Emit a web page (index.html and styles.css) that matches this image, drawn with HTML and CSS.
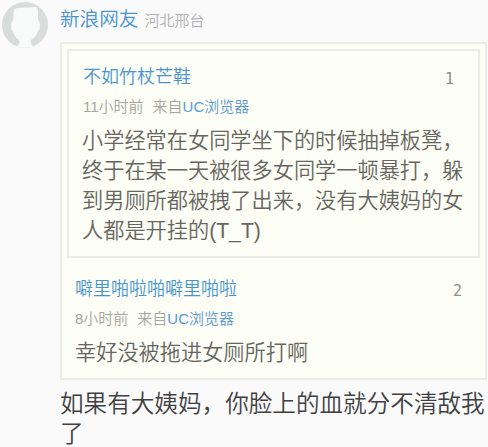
FILE: index.html
```html
<!DOCTYPE html>
<html lang="zh-CN">
<head>
  <meta charset="UTF-8">
  <meta name="viewport" content="width=device-width, initial-scale=1.0">
  <title>网友评论</title>
  <link rel="stylesheet" href="styles.css">
</head>
<body>
  <div class="comment">
    <svg class="avatar" viewBox="0 0 46 46">
      <circle cx="23" cy="23" r="23" fill="#d8dcdb"/>
      <path d="M12 8 Q13 6 16 6 L34 5 Q36 6 36 9 L36 18 Q38 20 38 24 Q38 28 36 29 Q34 35 29 38 Q28 41 31 44.6 Q23 47 15 44.6 Q19 41 17 38 Q12 35 11 29 Q9 28 9 24 Q9 20 11 18 Z" fill="#f8faf9"/>
    </svg>
    <div class="main">
      <div class="user"><span class="name">新浪网友</span><span class="area">河北邢台</span></div>
      <div class="quote outer">
        <div class="quote inner">
          <div class="head"><span class="name">不如竹杖芒鞋</span><span class="floor">1</span></div>
          <div class="meta"><span class="time">11小时前</span>来自<span class="from">UC浏览器</span></div>
          <p class="text">小学经常在女同学坐下的时候抽掉板凳，<br>终于在某一天被很多女同学一顿暴打，躲<br>到男厕所都被拽了出来，没有大姨妈的女<br>人都是开挂的(T_T)</p>
        </div>
        <div class="reply">
          <div class="head"><span class="name">噼里啪啦啪噼里啪啦</span><span class="floor">2</span></div>
          <div class="meta"><span class="time">8小时前</span>来自<span class="from">UC浏览器</span></div>
          <p class="text">幸好没被拖进女厕所打啊</p>
        </div>
      </div>
      <p class="content">如果有大姨妈，你脸上的血就分不清敌我<br>了</p>
    </div>
  </div>
</body>
</html>
```
FILE: styles.css
```css
* {
  box-sizing: border-box;
}
body {
  margin: 0;
  background: #fafafb;
  font-family: "Liberation Sans", "Noto Sans CJK SC", sans-serif;
  font-weight: 350;
  overflow: hidden;
}
p {
  margin: 0;
}
.comment {
  display: flex;
  padding: 2px 1px 0 2px;
}
.avatar {
  width: 46px;
  height: 46px;
  margin-right: 12px;
  flex: none;
}
.main {
  flex: 1;
  white-space: nowrap;
}
.user {
  height: 40px;
  line-height: 34px;
}
.name {
  color: #4795d1;
  font-size: 18px;
}
.user .name {
  font-size: 19.6px;
}
.area {
  margin-left: 6px;
  color: #b0b0b0;
  font-size: 15px;
}
.quote {
  border: 2px solid #ebece6;
  background: #fdfef6;
}
.outer {
  height: 338px;
  padding: 5px;
}
.inner {
  height: 209px;
  padding: 12px 13px 0 14px;
}
.reply {
  padding: 17px 7px 0 8px;
}
.head {
  display: flex;
  justify-content: space-between;
  height: 28px;
  line-height: 29px;
}
.floor {
  margin-right: 11px;
  padding-top: 2px;
  color: #8e8e88;
  font-family: "DejaVu Sans Mono", monospace;
  font-size: 15px;
}
.meta {
  height: 30px;
  line-height: 31px;
  color: #a5a5a0;
  font-size: 15px;
}
.time {
  margin-right: 9px;
}
.from {
  color: #5b99d2;
}
.text {
  margin-left: -1px;
  padding-top: 5px;
  color: #666661;
  font-size: 21.2px;
  line-height: 30px;
}
.reply .text {
  margin-left: 0;
}
.content {
  margin-top: 9px;
  color: #404042;
  font-size: 23.6px;
  line-height: 30px;
}
```
